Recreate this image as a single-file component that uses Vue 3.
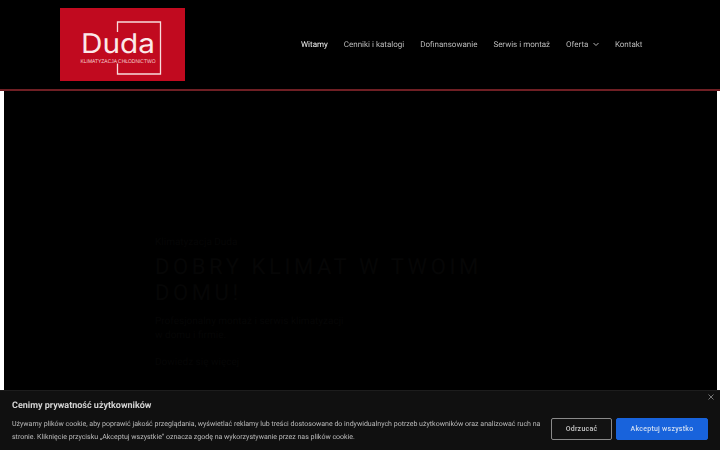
<script setup>
const nav = [
  { label: 'Witamy', active: true },
  { label: 'Cenniki i katalogi' },
  { label: 'Dofinansowanie' },
  { label: 'Serwis i montaż' },
  { label: 'Oferta', caret: true },
  { label: 'Kontakt' },
]
</script>

<template>
  <div class="page">
    <header class="header">
      <div class="logo">
        <svg width="125" height="73" viewBox="0 0 125 73">
          <rect width="125" height="73" fill="#c10a1f" />
          <path d="M57.500 24 V14 H100.500 V66 H57.500 V55.500" fill="none" stroke="#f8dcdc" stroke-width="1.300" />
          <text x="21" y="45" textLength="74" lengthAdjust="spacingAndGlyphs" class="logo-name">Duda</text>
          <text x="20.500" y="55" textLength="75" lengthAdjust="spacingAndGlyphs" class="logo-sub">KLIMATYZACJA CHŁODNICTWO</text>
        </svg>
      </div>
      <nav class="nav">
        <a v-for="item in nav" :key="item.label" class="nav-item" :class="{ active: item.active }">
          {{ item.label }}
          <svg v-if="item.caret" class="caret" width="6" height="5" viewBox="0 0 6 5">
            <path d="M.5 1 3 3.500 5.500 1" fill="none" stroke="#b4b4b4" stroke-width="1" />
          </svg>
        </a>
      </nav>
    </header>
    <main class="hero-wrap">
      <section class="hero">
        <div class="hero-copy">
          <p class="eyebrow">Klimatyzacja Duda</p>
          <h1>DOBRY KLIMAT W TWOIM DOMU!</h1>
          <p class="lead">Profesjonalny montaż i serwis klimatyzacji w domu i firmie.</p>
          <p class="more">Dowiedz się więcej</p>
        </div>
      </section>
    </main>
    <aside class="cookie">
      <div class="close">
        <svg width="6" height="6" viewBox="0 0 6 6">
          <path d="M.5.5l5 5M5.500.5l-5 5" stroke="#777" stroke-width="1" />
        </svg>
      </div>
      <h2 class="gray">Cenimy prywatność użytkowników</h2>
      <div class="cookie-row">
        <p class="gray">Używamy plików cookie, aby poprawić jakość przeglądania, wyświetlać reklamy lub treści dostosowane do indywidualnych potrzeb użytkowników oraz analizować ruch na stronie. Kliknięcie przycisku „Akceptuj wszystkie” oznacza zgodę na wykorzystywanie przez nas plików cookie.</p>
        <div class="actions">
          <button class="reject"><span class="gray">Odrzucać</span></button>
          <button class="accept"><span class="gray">Akceptuj wszystko</span></button>
        </div>
      </div>
    </aside>
  </div>
</template>

<style>
html, body { margin: 0; background: #000; }
</style>

<style scoped>
.page {
  width: 720px;
  height: 450px;
  position: relative;
  overflow: hidden;
  background: #fff;
  font-family: Roboto, "Liberation Sans", sans-serif;
  text-rendering: geometricPrecision;
}
.gray { will-change: transform; display: block; }
.header {
  height: 91px;
  box-sizing: border-box;
  background: #000;
  border-bottom: 2px solid #6f1f24;
  display: flex;
  align-items: flex-start;
  justify-content: space-between;
  padding: 8px 78px 0 60px;
}
.logo { width: 125px; height: 73px; }
.logo svg { display: block; }
.logo-name {
  font-family: Inter, sans-serif;
  font-size: 27px;
  font-weight: 400;
  fill: #fbe9e9;
}
.logo-sub {
  font-family: "Liberation Sans", sans-serif;
  font-size: 5.400px;
  fill: #f6d0d0;
}
.nav {
  display: flex;
  gap: 16px;
  margin-top: 30px;
  font-size: 8px;
  line-height: 13px;
  will-change: transform;
}
.nav-item { color: #bababa; white-space: nowrap; }
.nav-item.active { color: #f4f4f4; }
.caret { margin-left: 2.500px; vertical-align: 0; }
.hero-wrap {
  height: 359px;
  padding: 0 3px 0 4px;
  box-sizing: border-box;
}
.hero {
  height: 100%;
  background: #000;
  padding: 146px 0 0 151px;
  box-sizing: border-box;
}
.hero-copy { width: 340px; color: #060606; }
.eyebrow { margin: 0 0 6px; font-size: 10px; line-height: 12px; }
h1 { margin: 0; font-size: 22px; line-height: 26px; font-weight: 400; letter-spacing: 3.600px; }
.lead { margin: 8px 0 0; font-size: 10px; line-height: 14px; width: 190px; }
.more { margin: 14px 0 0; font-size: 10px; line-height: 12px; }
.cookie {
  position: absolute;
  left: 0;
  right: 0;
  bottom: 0;
  height: 60px;
  box-sizing: border-box;
  background: #101010;
  border-top: 1px solid #1d1d1d;
  padding: 9px 12px 0;
  color: #c8c8c8;
}
.close { position: absolute; top: 1px; right: 4px; line-height: 0; padding: 2px; }
h2 {
  margin: 0;
  font-size: 9px;
  line-height: 13px;
  font-weight: 700;
  color: #d4d4d4;
}
.cookie-row {
  display: flex;
  align-items: flex-start;
  justify-content: space-between;
  margin-top: 4px;
}
.cookie-row p {
  margin: 0;
  width: 530px;
  font-size: 7.030px;
  line-height: 13px;
  color: #bcbcbc;
}
.actions { display: flex; gap: 4px; margin-top: 1px; }
button {
  height: 22px;
  border-radius: 2px;
  font-family: inherit;
  font-size: 7px;
  font-weight: 500;
  letter-spacing: .25px;
  padding: 0;
  box-sizing: border-box;
}
.reject {
  width: 61px;
  background: #121212;
  border: 1.500px solid #8a8a8a;
  color: #c8c8c8;
}
.accept {
  width: 92px;
  background: #1863dc;
  border: 1px solid #1863dc;
  color: #d0def2;
}
</style>
